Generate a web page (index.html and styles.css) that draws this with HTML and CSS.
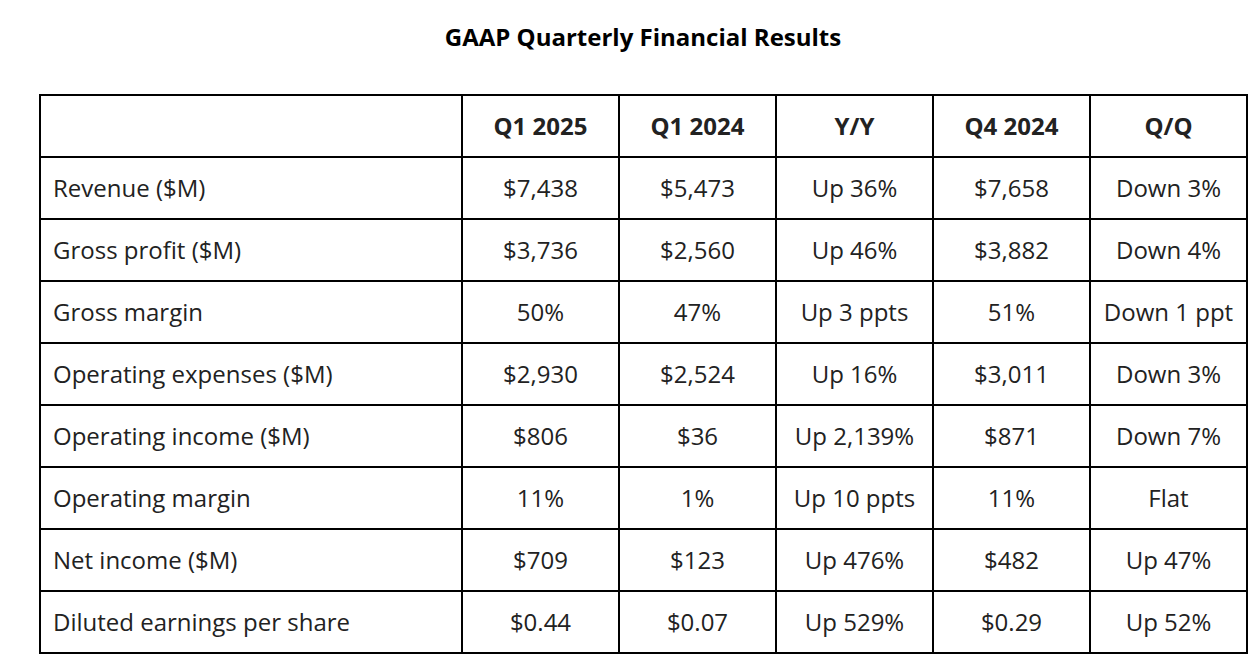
FILE: index.html
```html
<!DOCTYPE html>
<html>
<head>
<meta charset="utf-8">
<link rel="stylesheet" href="styles.css">
</head>
<body>
<div class="wrap">
  <h1 class="title">GAAP Quarterly Financial Results</h1>
  <table class="fin">
    <colgroup>
      <col class="c-label"><col class="c-num"><col class="c-num"><col class="c-num"><col class="c-num"><col class="c-num">
    </colgroup>
    <thead>
      <tr><th></th><th>Q1 2025</th><th>Q1 2024</th><th>Y/Y</th><th>Q4 2024</th><th>Q/Q</th></tr>
    </thead>
    <tbody>
      <tr><td>Revenue ($M)</td><td>$7,438</td><td>$5,473</td><td>Up 36%</td><td>$7,658</td><td>Down 3%</td></tr>
      <tr><td>Gross profit ($M)</td><td>$3,736</td><td>$2,560</td><td>Up 46%</td><td>$3,882</td><td>Down 4%</td></tr>
      <tr><td>Gross margin</td><td>50%</td><td>47%</td><td>Up 3 ppts</td><td>51%</td><td>Down 1 ppt</td></tr>
      <tr><td>Operating expenses ($M)</td><td>$2,930</td><td>$2,524</td><td>Up 16%</td><td>$3,011</td><td>Down 3%</td></tr>
      <tr><td>Operating income ($M)</td><td>$806</td><td>$36</td><td>Up 2,139%</td><td>$871</td><td>Down 7%</td></tr>
      <tr><td>Operating margin</td><td>11%</td><td>1%</td><td>Up 10 ppts</td><td>11%</td><td>Flat</td></tr>
      <tr><td>Net income ($M)</td><td>$709</td><td>$123</td><td>Up 476%</td><td>$482</td><td>Up 47%</td></tr>
      <tr><td>Diluted earnings per share</td><td>$0.44</td><td>$0.07</td><td>Up 529%</td><td>$0.29</td><td>Up 52%</td></tr>
    </tbody>
  </table>
</div>
</body>
</html>
```
FILE: styles.css
```css
html, body {
  margin: 0;
  padding: 0;
  background: #fff;
}
body {
  font-family: "Open Sans", "Liberation Sans", sans-serif;
  color: #222;
}
.wrap {
  width: 1208px;
  margin-left: 39px;
  padding-top: 22px;
}
.title {
  margin: 0 0 42px 0;
  font-size: 24px;
  line-height: 30px;
  font-weight: 700;
  color: #000;
  text-align: center;
}
.fin {
  width: 1208px;
  border-collapse: collapse;
  table-layout: fixed;
  border: 2px solid #000;
}
.c-label { width: 422px; }
.c-num { width: 157px; }
.fin th, .fin td {
  border: 2px solid #000;
  height: 62px;
  padding: 0 0 2px 0;
  box-sizing: border-box;
  font-size: 24px;
  text-align: center;
  vertical-align: middle;
}
.fin th {
  font-weight: 700;
}
.fin td:first-child {
  text-align: left;
  padding-left: 12px;
}
```
